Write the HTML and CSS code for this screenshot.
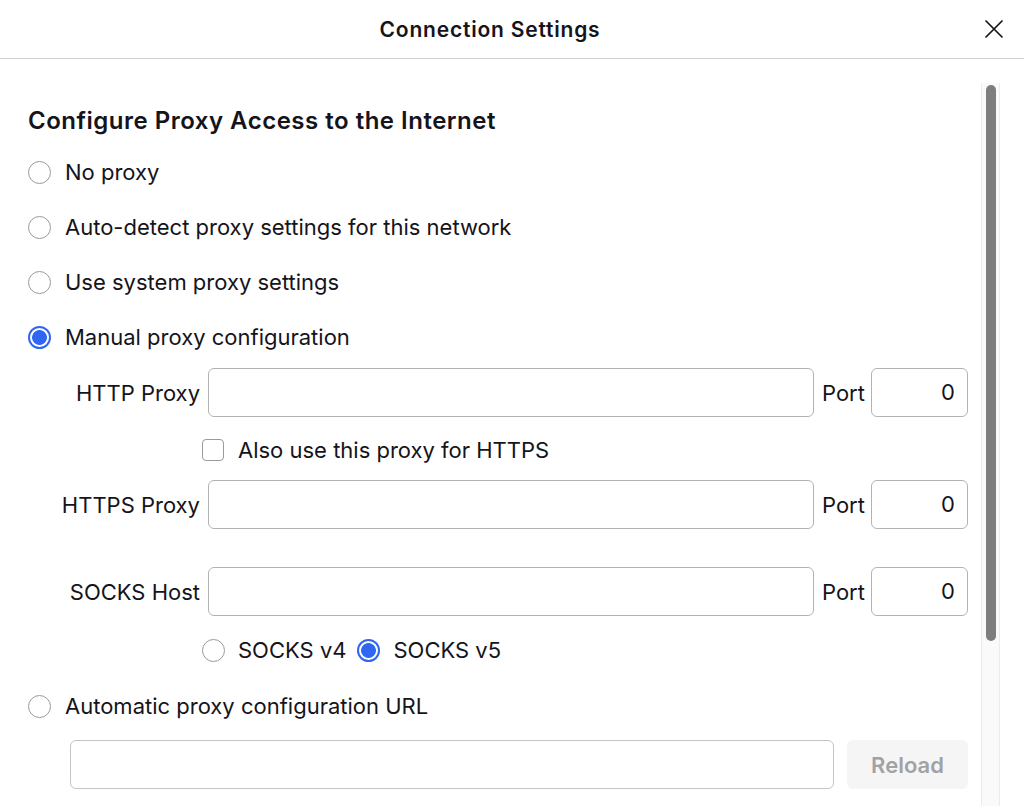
FILE: index.html
```html
<!DOCTYPE html>
<html lang="en">
<head>
<meta charset="utf-8">
<title>Connection Settings</title>
<link rel="stylesheet" href="styles.css">
</head>
<body>
<div class="dialog">
  <header class="titlebar">
    <h1 class="title">Connection Settings</h1>
    <button class="close" aria-label="Close">
      <svg width="20" height="20" viewBox="0 0 20 20"><path d="M2 2 L18 18 M18 2 L2 18" stroke="#15141a" stroke-width="1.7" stroke-linecap="round" fill="none"/></svg>
    </button>
  </header>
  <div class="body">
    <main class="content">
      <h2 class="heading">Configure Proxy Access to the Internet</h2>
      <label class="opt first"><span class="radio"></span><span>No proxy</span></label>
      <label class="opt"><span class="radio"></span><span>Auto-detect proxy settings for this network</span></label>
      <label class="opt"><span class="radio"></span><span>Use system proxy settings</span></label>
      <label class="opt"><span class="radio on"></span><span>Manual proxy configuration</span></label>

      <div class="proxyrow r-http">
        <span class="plabel">HTTP Proxy</span>
        <span class="field"></span>
        <span class="portlabel">Port</span>
        <span class="field port">0</span>
      </div>
      <label class="check-row"><span class="checkbox"></span><span>Also use this proxy for HTTPS</span></label>
      <div class="proxyrow r-https">
        <span class="plabel">HTTPS Proxy</span>
        <span class="field"></span>
        <span class="portlabel">Port</span>
        <span class="field port">0</span>
      </div>
      <div class="proxyrow r-socks">
        <span class="plabel">SOCKS Host</span>
        <span class="field"></span>
        <span class="portlabel">Port</span>
        <span class="field port">0</span>
      </div>
      <div class="socks-ver">
        <label class="sv"><span class="radio"></span><span>SOCKS v4</span></label>
        <label class="sv"><span class="radio on"></span><span>SOCKS v5</span></label>
      </div>
      <label class="opt auto"><span class="radio"></span><span>Automatic proxy configuration URL</span></label>
      <div class="url-row">
        <span class="field url"></span>
        <button class="reload">Reload</button>
      </div>
    </main>
    <div class="scrollbar"><div class="thumb"></div></div>
  </div>
</div>
</body>
</html>
```
FILE: styles.css
```css
* { box-sizing: border-box; }
html, body { margin: 0; padding: 0; background: #fff; }
body {
  font-family: Inter, "Noto Sans", sans-serif;
  color: #15141a;
  width: 1024px;
  height: 806px;
  overflow: hidden;
}
.dialog { display: flex; flex-direction: column; height: 806px; }
.titlebar {
  height: 59px;
  flex: none;
  border-bottom: 1px solid #d2d2d4;
  display: flex;
  align-items: center;
  justify-content: center;
  position: relative;
}
.title {
  margin: 0;
  font-size: 21px;
  font-weight: 600;
  letter-spacing: 0.8px;
  line-height: 24px;
  margin-left: -44px;
  margin-top: 2px;
}
.close {
  position: absolute;
  right: 20px;
  top: 19px;
  width: 20px;
  height: 20px;
  padding: 0;
  border: 0;
  background: none;
}
.close svg { display: block; }
.body { flex: 1; display: flex; min-height: 0; }
.content {
  flex: 1;
  padding: 48px 13px 0 28px;
  display: flex;
  flex-direction: column;
  font-size: 22px;
}
.heading {
  margin: 0;
  font-size: 24px;
  font-weight: 600;
  letter-spacing: 0.5px;
  line-height: 28px;
  height: 28px;
}
.opt {
  display: flex;
  align-items: center;
  gap: 14px;
  height: 24px;
  line-height: 24px;
  margin-top: 31px;
}
.opt.first { margin-top: 25px; }
.opt.auto { margin-top: 32px; }
.radio {
  width: 23px;
  height: 23px;
  flex: none;
  border-radius: 50%;
  border: 1.5px solid #9a9a9a;
  background: #fff;
}
.radio.on {
  border: 2px solid #2f66f2;
  background: radial-gradient(circle, #2f66f2 0 7px, #fff 7.8px);
}
.proxyrow {
  display: grid;
  grid-template-columns: 172px 606px 41px 97px;
  column-gap: 8px;
  align-items: center;
  height: 49px;
}
.r-http { margin-top: 19px; }
.r-https { margin-top: 18px; }
.r-socks { margin-top: 38px; }
.plabel { text-align: right; }
.field {
  display: block;
  height: 49px;
  border: 1px solid #b3b3b3;
  border-radius: 6px;
  background: #fff;
}
.field.port {
  text-align: right;
  line-height: 47px;
  padding-right: 12px;
}
.check-row {
  display: flex;
  align-items: center;
  gap: 14px;
  height: 24px;
  margin-top: 21px;
  padding-left: 174px;
}
.checkbox {
  width: 22px;
  height: 22px;
  flex: none;
  border: 1.5px solid #9a9a9a;
  border-radius: 4px;
  background: #fff;
}
.socks-ver {
  display: flex;
  align-items: center;
  height: 24px;
  margin-top: 22px;
  padding-left: 174px;
  gap: 11px;
}
.sv { display: flex; align-items: center; gap: 13px; }
.url-row {
  display: flex;
  gap: 13px;
  margin-top: 22px;
  padding-left: 42px;
  height: 49px;
}
.field.url { width: 764px; border-color: #c4c4c4; }
.reload {
  width: 121px;
  height: 49px;
  border: 0;
  border-radius: 6px;
  background: #f5f5f6;
  color: #a2a2a4;
  font-family: inherit;
  font-size: 22px;
  font-weight: 600;
  padding: 0;
}
.scrollbar {
  width: 19px;
  flex: none;
  margin: 24px 24px 0 0;
  background: #fafafa;
  border-left: 1px solid #ececec;
  border-right: 1px solid #ececec;
  padding: 2px 3px 0 4px;
}
.thumb {
  height: 556px;
  border-radius: 6px;
  background: #7e7e7e;
}
```
